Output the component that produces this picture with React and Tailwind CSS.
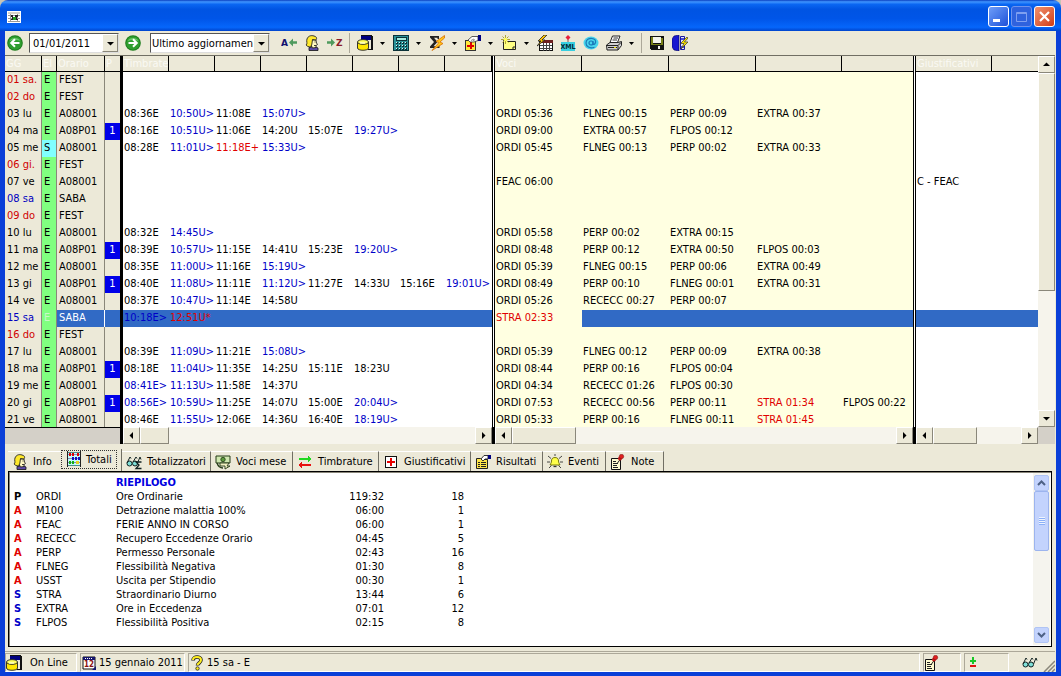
import { useState } from 'react';
import clsx from 'clsx';

// giorno, stato, orario, P, timbrate, voci, giustificativo
const days = [
  ['01 sa.', 'E', 'FEST', '', [], []],
  ['02 do', 'E', 'FEST', '', [], []],
  ['03 lu', 'E', 'A08001', '', ['08:36E', '10:50U>', '11:08E', '15:07U>'], ['ORDI 05:36', 'FLNEG 00:15', 'PERP 00:09', 'EXTRA 00:37']],
  ['04 ma', 'E', 'A08P01', '1', ['08:16E', '10:51U>', '11:06E', '14:20U', '15:07E', '19:27U>'], ['ORDI 09:00', 'EXTRA 00:57', 'FLPOS 00:12']],
  ['05 me', 'S', 'A08001', '', ['08:28E', '11:01U>', '11:18E+', '15:33U>'], ['ORDI 05:45', 'FLNEG 00:13', 'PERP 00:02', 'EXTRA 00:33']],
  ['06 gi.', 'E', 'FEST', '', [], []],
  ['07 ve', 'E', 'A08001', '', [], ['FEAC 06:00'], 'C - FEAC'],
  ['08 sa', 'E', 'SABA', '', [], []],
  ['09 do', 'E', 'FEST', '', [], []],
  ['10 lu', 'E', 'A08001', '', ['08:32E', '14:45U>'], ['ORDI 05:58', 'PERP 00:02', 'EXTRA 00:15']],
  ['11 ma', 'E', 'A08P01', '1', ['08:39E', '10:57U>', '11:15E', '14:41U', '15:23E', '19:20U>'], ['ORDI 08:48', 'PERP 00:12', 'EXTRA 00:50', 'FLPOS 00:03']],
  ['12 me', 'E', 'A08001', '', ['08:35E', '11:00U>', '11:16E', '15:19U>'], ['ORDI 05:39', 'FLNEG 00:15', 'PERP 00:06', 'EXTRA 00:49']],
  ['13 gi', 'E', 'A08P01', '1', ['08:40E', '11:08U>', '11:11E', '11:12U>', '11:27E', '14:33U', '15:16E', '19:01U>'], ['ORDI 08:49', 'PERP 00:10', 'FLNEG 00:01', 'EXTRA 00:31']],
  ['14 ve', 'E', 'A08001', '', ['08:37E', '10:47U>', '11:14E', '14:58U'], ['ORDI 05:26', 'RECECC 00:27', 'PERP 00:07']],
  ['15 sa', 'E', 'SABA', '', ['10:18E>', '12:51U*'], ['STRA 02:33']],
  ['16 do', 'E', 'FEST', '', [], []],
  ['17 lu', 'E', 'A08001', '', ['08:39E', '11:09U>', '11:21E', '15:08U>'], ['ORDI 05:39', 'FLNEG 00:12', 'PERP 00:09', 'EXTRA 00:38']],
  ['18 ma', 'E', 'A08P01', '1', ['08:18E', '11:04U>', '11:35E', '14:25U', '15:11E', '18:23U'], ['ORDI 08:44', 'PERP 00:16', 'FLPOS 00:04']],
  ['19 me', 'E', 'A08001', '', ['08:41E>', '11:13U>', '11:58E', '14:37U'], ['ORDI 04:34', 'RECECC 01:26', 'FLPOS 00:30']],
  ['20 gi', 'E', 'A08P01', '1', ['08:56E>', '10:59U>', '11:25E', '14:07U', '15:00E', '20:04U>'], ['ORDI 07:53', 'RECECC 00:56', 'PERP 00:11', 'STRA 01:34', 'FLPOS 00:22']],
  ['21 ve', 'E', 'A08001', '', ['08:46E', '11:55U>', '12:06E', '14:36U', '16:40E', '18:19U>'], ['ORDI 05:33', 'PERP 00:16', 'FLNEG 00:11', 'STRA 01:45']],
];

const totals = [
  ['P', 'ORDI', 'Ore Ordinarie', '119:32', '18'],
  ['A', 'M100', 'Detrazione malattia 100%', '06:00', '1'],
  ['A', 'FEAC', 'FERIE ANNO IN CORSO', '06:00', '1'],
  ['A', 'RECECC', 'Recupero Eccedenze Orario', '04:45', '5'],
  ['A', 'PERP', 'Permesso Personale', '02:43', '16'],
  ['A', 'FLNEG', 'Flessibilità Negativa', '01:30', '8'],
  ['A', 'USST', 'Uscita per Stipendio', '00:30', '1'],
  ['S', 'STRA', 'Straordinario Diurno', '13:44', '6'],
  ['S', 'EXTRA', 'Ore in Eccedenza', '07:01', '12'],
  ['S', 'FLPOS', 'Flessibilità Positiva', '02:15', '8'],
];

const kindColor = { P: 'text-black', A: 'text-[#e00000]', S: 'text-[#0000c8]' };

const dayColor = (day) => {
  if (['01 sa.', '02 do', '06 gi.', '09 do', '16 do'].includes(day)) return 'text-[#d00000]';
  if (day.endsWith('sa')) return 'text-[#0000c0]';
  return 'text-black';
};

const stampColor = (t) => {
  if (/[+*]$/.test(t)) return 'text-[#e00000]';
  if (t.endsWith('>')) return 'text-[#0000c8]';
  return 'text-black';
};

/* ---------- icons ---------- */

function Icon({ children, smooth }) {
  return (
    <svg viewBox="0 0 16 16" className="w-4 h-4 shrink-0" shapeRendering={smooth ? 'auto' : 'crispEdges'} aria-hidden="true">
      {children}
    </svg>
  );
}

const RoundArrow = ({ flip }) => (
  <Icon smooth>
    <circle cx="8" cy="8" r="7.8" fill="#1c7d1c" />
    <circle cx="8" cy="8" r="6.8" fill="#2f9e2f" />
    <path d="M2.500 6a6 5 0 0 1 11 0q-5-2-11 0z" fill="#6cc86c" />
    <path d={flip ? 'M3.500 8h8M8 4.200 11.800 8 8 11.800' : 'M12.500 8h-8M8 4.200 4.200 8 8 11.800'} fill="none" stroke="#fff" strokeWidth="2" />
  </Icon>
);

const SortA = () => (
  <Icon smooth>
    <text x="0" y="11" fontSize="9" fontWeight="bold" fill="#101070" fontFamily="DejaVu Sans">A</text>
    <path d="M8 7.500 12 3.500v2.800h4v2.400h-4v2.800z" fill="#4f9a5d" />
  </Icon>
);

const SortZ = () => (
  <Icon smooth>
    <path d="M8 7.500 4 3.500v2.800H0v2.400h4v2.800z" fill="#4f9a5d" />
    <text x="9" y="11" fontSize="9" fontWeight="bold" fill="#8b1a2a" fontFamily="DejaVu Sans">Z</text>
  </Icon>
);

const Person = () => (
  <Icon smooth>
    <path d="M5 15.500v-3l5-1.500 4 2v2.500z" fill="#5a4aa8" stroke="#111" strokeWidth=".8" />
    <path d="M7 5h5l.5 3 1 1.500-1.500 1v2l-3.500.5L7 10z" fill="#fff8c0" stroke="#111" strokeWidth=".8" />
    <path d="M3 4c1-3 4-4 7-3 3 1 3 2 2 4L8.500 4.500 8 8c0 2-1 2-1 4-3 0-4-1-5-2 2-1 0-4 1-6z" fill="#ffe92b" stroke="#222" strokeWidth=".9" />
    <path d="M10.500 7h1M10 10.500h2" stroke="#111" strokeWidth=".8" fill="none" />
  </Icon>
);

const Database = () => (
  <Icon>
    <path d="M4 1h11v13H4z" fill="#ece9d8" />
    <path d="M4 1h11v4H4z" fill="#000080" />
    <path d="M14 1h2v14h-5v-1h3zM4 0h11v1H4z" fill="#111" />
    <g shapeRendering="auto">
      <path d="M.5 7v6c0 3 11 3 11 0V7" fill="#ffe600" stroke="#222" strokeWidth=".9" />
      <ellipse cx="6" cy="7" rx="5.500" ry="2.400" fill="#ffff60" stroke="#222" strokeWidth=".9" />
      <path d="M3 8h5" stroke="#fff" />
    </g>
  </Icon>
);

const Calculator = () => (
  <Icon>
    <rect x="0" y="0" width="16" height="16" fill="#0b3238" />
    <rect x="1" y="1" width="14" height="14" fill="#2a9298" />
    <rect x="3" y="2" width="10" height="3" fill="#a4ecdf" stroke="#0b3238" />
    <path d="M3 7.500h11M3 10.500h11M3 13.500h11" stroke="#0b3238" strokeWidth="2" strokeDasharray="2 1" />
    <path d="M3 7h11M3 10h11M3 13h11" stroke="#d5f5f0" strokeDasharray="1 2" />
  </Icon>
);

const Sigma = () => (
  <Icon smooth>
    <path d="M1 1h9v3H8.500V2.800H5L8.500 7 4.500 11.200H9V10h1.500v3H1v-1.500L5 7 1 2.500z" fill="#222" />
    <path d="M15.500.5 7 6.500l3 1L3 15.500l11-7-3-1.500 4.500-4z" fill="#ffc818" stroke="#d96c00" strokeWidth=".8" />
  </Icon>
);

const HandCross = () => (
  <Icon>
    <rect x=".5" y="5.500" width="10" height="10" fill="#ffe93b" stroke="#333" />
    <path d="M5.500 7v7M2 10.500h7" stroke="#e00000" strokeWidth="2" />
    <path d="M3 5 7 1.500h6v4l-4 1.500H5z" fill="#fff" stroke="#333" strokeWidth=".8" shapeRendering="auto" />
    <path d="M6 5.500 9 4M8 6l2-1.500" stroke="#555" strokeWidth=".7" shapeRendering="auto" />
    <path d="M13 0h3v6h-3z" fill="#000080" />
  </Icon>
);

const NewNote = () => (
  <Icon smooth>
    <path d="M2.500 5.500h3l1 1h8v8h-12z" fill="#ffff84" stroke="#222" />
    <path d="M12 15v-3h3" stroke="#222" fill="none" />
    <path d="M4.500 0v9M0 4.500h9M1.500 1.500l6 6M7.500 1.500l-6 6" stroke="#a89d20" strokeWidth=".9" />
    <circle cx="4.500" cy="4.500" r="1.800" fill="#ffff60" />
  </Icon>
);

const FlashTable = () => (
  <Icon>
    <rect x="2.500" y="5.500" width="13" height="10" fill="#fff" stroke="#111" />
    <rect x="3" y="5" width="13" height="3" fill="#6e2020" />
    <path d="M3 10.500h12M3 13h12M6.500 8v8M9.500 8v8M12.500 8v8" stroke="#444" />
    <path d="M7 0 1 6h3L0 11l8-6H5l5-5z" fill="#ffc400" stroke="#222" strokeWidth=".8" shapeRendering="auto" />
  </Icon>
);

const Xml = () => (
  <Icon smooth>
    <path d="M8 4v3" stroke="#8a5050" />
    <path d="M8 0l2.500 2.500L8 5 5.500 2.500z" fill="#e8203c" />
    <rect x="1" y="7" width="14" height="9" fill="#38cfe0" />
    <text x="8" y="14" fontSize="7" fontWeight="bold" textAnchor="middle" fill="#052c38" fontFamily="DejaVu Sans Condensed">XML</text>
  </Icon>
);

const At = () => (
  <Icon smooth>
    <ellipse cx="8" cy="8" rx="7.500" ry="6.500" fill="#48d4ec" />
    <path d="M11.500 12.200C6.500 14 3 11.500 3 8s3-4.800 6-4.500 4 2 3.500 4-2.500 2.500-2.500 1V6" fill="none" stroke="#1a78b8" strokeWidth="1.200" />
    <circle cx="8" cy="8" r="2" fill="none" stroke="#1a78b8" strokeWidth="1.200" />
  </Icon>
);

const Printer = () => (
  <Icon smooth>
    <path d="M4 7.500 6.500 1H14l-2.500 6.500z" fill="#fff" stroke="#222" />
    <path d="M7.500 3h4.500M6.500 5h4.500" stroke="#333" />
    <path d="M.5 10 4 7.500h8l3.500-1v4L12 15H1z" fill="#d0d0d0" stroke="#222" />
    <path d="M1 10.500h11l3-3M12 10.500V15M2 12.500h9" stroke="#222" fill="none" />
    <path d="M8 12.500h2" stroke="#e8d800" />
  </Icon>
);

const Floppy = () => (
  <Icon>
    <path d="M1 1h14v14H2l-1-1z" fill="#111" />
    <path d="M2 2h2v7H2zM12 3h2v6h-2z" fill="#778018" />
    <path d="M4 2h8v6H4z" fill="#f4f4ec" />
    <path d="M2 9h12v1H2z" fill="#778018" />
    <path d="M9 11h2v3H9z" fill="#f4f4ec" />
  </Icon>
);

const Exit = () => (
  <Icon smooth>
    <path d="M0 4 2 1l5-1v16l-5-1-2-3z" fill="#1717d0" stroke="#000060" strokeWidth=".6" />
    <path d="M8.500 1.500h4v13h-4z" fill="#e8e8f4" stroke="#1717a0" />
    <path d="M9 4h3M9 12h3" stroke="#1717d0" strokeWidth="1.500" />
    <path d="M15 2 8.500 8.500H12L9 14l7-7h-3.500L16 3z" fill="#ffe500" stroke="#333" strokeWidth=".7" />
  </Icon>
);

const Abacus = () => (
  <Icon>
    <rect x="1.500" y="1.500" width="13" height="13" fill="#c4fbfb" stroke="#4b8b8b" />
    <path d="M2 3.500h12M2 7.500h12M2 11.500h12" stroke="#88b" />
    <path d="M3 2h2v3H3zM6 2h2v3H6zM11 2h2v3h-2z" fill="#e00000" />
    <path d="M6 6h2v3H6zM9 6h2v3H9zM12 6h2v3h-2z" fill="#1010c0" />
    <path d="M3 10h2v3H3zM6 10h2v3H6z" fill="#12b012" />
    <path d="M10 10h3v3h-3z" fill="#e8d020" />
    <path d="M1.500 0v16M14.500 0v16" stroke="#222" />
  </Icon>
);

const Glasses = ({ sum }) => (
  <Icon smooth>
    <circle cx="3.500" cy="9.500" r="2.500" fill="#7fe0d8" stroke="#122" />
    <circle cx="9" cy="9.500" r="2.500" fill="#7fe0d8" stroke="#122" />
    <path d="M1 9 4 3l1 1.500M7 8l3-5 1 1.500M11.500 9 14 3l1 2.500" fill="none" stroke="#122" />
    {sum && <path d="M15.500 8H10l3 3-3 3.500h5.500" fill="none" stroke="#122" strokeWidth="1.300" />}
  </Icon>
);

const Money = () => (
  <Icon smooth>
    <path d="M1 2h14v7H1z" fill="#cfe8b0" stroke="#243a16" />
    <circle cx="8" cy="5.500" r="2.200" fill="#5b9a3c" stroke="#243a16" strokeWidth=".8" />
    <path d="M5 9h9l-2 3h3l-5 3v-3H5z" fill="#f0f0c0" stroke="#243a16" strokeWidth=".9" />
    <path d="M2 9c1 3 3 5 6 5" fill="none" stroke="#243a16" strokeWidth="1.300" />
  </Icon>
);

const Swap = () => (
  <Icon>
    <path d="M2 4h9V2l4 3-4 3V6H2z" fill="#20d820" />
    <path d="M14 10H5V8l-4 3 4 3v-2h9z" fill="#e81010" />
  </Icon>
);

const Cross = () => (
  <Icon>
    <rect x="2.500" y="2.500" width="11" height="11" fill="#fff" stroke="#111" />
    <path d="M8 4v8M4 8h8" stroke="#e80000" strokeWidth="2" />
  </Icon>
);

const Results = () => (
  <Icon smooth>
    <path d="M1.500 4.500h4l1 1h6v9h-11z" fill="#ffe74a" stroke="#222" />
    <path d="M3 8.500h2M6 8.500h5M3 10.500h2M6 10.500h5M3 12.500h2M6 12.500h5" stroke="#222" />
    <path d="M6 5 9 1.500h4V5h-3l-2 2z" fill="#fff" stroke="#222" strokeWidth=".9" />
    <path d="M13 1h3v4h-3z" fill="#000080" />
  </Icon>
);

const Bulb = () => (
  <Icon smooth>
    <path d="M1 2l3 2.500M15 2l-3 2.500M0 8h3M13 8h3M2 14l2.500-2.500M14 14l-2.500-2.500M8 0v2" stroke="#333" strokeWidth=".9" />
    <path d="M8 3.500c3 0 3.500 2 3.500 3.500s.5 2 1.500 4H3c1-2 1.500-2.500 1.500-4S5 3.500 8 3.500z" fill="#ffff48" stroke="#6a6a00" strokeWidth=".9" />
    <path d="M6.500 12.500h3" stroke="#333" strokeWidth="1.300" />
  </Icon>
);

const PinNote = () => (
  <Icon smooth>
    <path d="M1.500 4.500h9v11h-9z" fill="#fffbd0" stroke="#111" />
    <path d="M3 7.500h3M3 9.500h5M3 11.500h4M3 13.500h5" stroke="#222" />
    <path d="M7.500 9l3-4" stroke="#222" />
    <circle cx="10" cy="4.500" r="2" fill="#c81818" />
    <circle cx="11.500" cy="2.500" r="2.200" fill="#e02020" stroke="#701010" strokeWidth=".5" />
  </Icon>
);

const Calendar = () => (
  <Icon smooth>
    <path d="M2 2h12v11l-1 1H2z" fill="#fff" stroke="#111" />
    <path d="M2 2h12v3H2z" fill="#16166e" />
    <path d="M4 3.500h8" stroke="#fff" strokeDasharray="1 1" />
    <text x="3" y="12" fontSize="8" fontWeight="bold" fill="#8a1010" fontFamily="DejaVu Sans Condensed">12</text>
    <path d="M11 15h4v-4z" fill="#16166e" />
  </Icon>
);

const Question = () => (
  <Icon smooth>
    <path d="M4 5.500C4 1 12 1 12 5c0 3-3.500 3-3.500 5.500" fill="none" stroke="#222" strokeWidth="3.600" />
    <circle cx="8.500" cy="13.500" r="1.700" fill="#ffee20" stroke="#222" strokeWidth=".8" />
    <path d="M4 5C4 1 12 1 12 5c0 3-3.500 3-3.500 5" fill="none" stroke="#ffee20" strokeWidth="2" />
  </Icon>
);

const PlusMinus = () => (
  <Icon>
    <path d="M8 2v7M5 5.500h6" stroke="#18c828" strokeWidth="2" />
    <path d="M5 11h6" stroke="#e01010" strokeWidth="2" />
  </Icon>
);

const arrows = {
  up: 'M0 5h7L3.500 1.500z',
  down: 'M0 2h7L3.500 5.500z',
  left: 'M5 0v7L1.500 3.500z',
  right: 'M2 0v7l3.500-3.500z',
};

const Arrow = ({ dir }) => (
  <svg viewBox="0 0 7 7" className="w-[7px] h-[7px]" aria-hidden="true">
    <path d={arrows[dir]} fill="#000" />
  </svg>
);

/* ---------- controls ---------- */

const raised = 'bg-[#ece9d8] border border-t-white border-l-white border-r-[#8a877a] border-b-[#8a877a]';
const track = 'bg-[#f6f4ec]';

function ScrollButton({ dir, label }) {
  return (
    <button type="button" aria-label={label} className={clsx(raised, 'w-[17px] h-[17px] shrink-0 flex items-center justify-center')}>
      <Arrow dir={dir} />
    </button>
  );
}

function HScroll({ thumb }) {
  return (
    <div className={clsx(track, 'h-[17px] flex')}>
      <ScrollButton dir="left" label="Scorri a sinistra" />
      <div className={clsx(raised, thumb)} />
      <div className="flex-1" />
      <ScrollButton dir="right" label="Scorri a destra" />
    </div>
  );
}

function Divider() {
  return (
    <div className="w-[3px] shrink-0 flex flex-col bg-black">
      <div className="flex-1 mx-px bg-white" />
      <div className="h-[17px]" />
    </div>
  );
}

function Tool({ icon, label, menu }) {
  return (
    <div className="flex items-center shrink-0">
      <button type="button" aria-label={label} className="w-[23px] h-[22px] flex items-center justify-center">{icon}</button>
      {menu && (
        <button type="button" aria-label={`${label}, opzioni`} className="w-[13px] h-[22px] flex items-center justify-center">
          <svg viewBox="0 0 5 3" className="w-[5px] h-[3px]" aria-hidden="true"><path d="M0 0h5L2.500 3z" /></svg>
        </button>
      )}
    </div>
  );
}

const Head = ({ children, last }) => (
  <th
    scope="col"
    className={clsx(
      'h-4 p-0 pl-px text-left font-normal text-[#faf9f4] bg-[#ece9d8] border-b border-b-black overflow-hidden',
      !last && 'border-r border-r-black'
    )}
  >
    {children}
  </th>
);

function Toolbar() {
  const [date, setDate] = useState('01/01/2011');

  return (
    <div className="h-6 flex items-center bg-[#ece9d8] overflow-hidden">
      <button type="button" aria-label="Indietro" className="w-6 flex justify-center pr-1"><RoundArrow /></button>
      <div className="w-[90px] h-5 flex bg-white border border-[#555] border-b-[#ddd] border-r-[#ddd]">
        <input
          aria-label="Data"
          value={date}
          onChange={(e) => setDate(e.target.value)}
          className="min-w-0 flex-1 pl-[3px] bg-white outline-none"
        />
        <button type="button" aria-label="Apri calendario" className={clsx(raised, 'w-4 flex items-center justify-center')}>
          <Arrow dir="down" />
        </button>
      </div>
      <button type="button" aria-label="Avanti" className="w-7 flex justify-center"><RoundArrow flip /></button>
      <div className="relative ml-[3px] w-[120px] h-5 bg-white border border-[#555] border-b-[#ddd] border-r-[#ddd]">
        <select aria-label="Vista" className="w-full h-full pl-px appearance-none bg-white outline-none overflow-hidden text-clip">
          <option>Ultimo aggiornamento</option>
        </select>
        <div className={clsx(raised, 'absolute top-0 right-0 w-4 h-[18px] flex items-center justify-center pointer-events-none')}>
          <Arrow dir="down" />
        </div>
      </div>
      <div className="flex ml-[7px]">
        <Tool icon={<SortA />} label="Precedente" />
        <Tool icon={<Person />} label="Dipendente" />
        <Tool icon={<SortZ />} label="Successivo" />
      </div>
      <div className="w-px h-5 mx-[3px] bg-[#aca899]" />
      <Tool icon={<Database />} label="Archivio" menu />
      <Tool icon={<Calculator />} label="Calcolo" menu />
      <Tool icon={<Sigma />} label="Totali" menu />
      <Tool icon={<HandCross />} label="Giustificativo" menu />
      <Tool icon={<NewNote />} label="Nuova nota" menu />
      <Tool icon={<FlashTable />} label="Elabora" />
      <Tool icon={<Xml />} label="Esporta" />
      <Tool icon={<At />} label="Posta" />
      <Tool icon={<Printer />} label="Stampa" menu />
      <div className="w-px h-5 mx-[3px] bg-[#aca899]" />
      <Tool icon={<Floppy />} label="Salva" />
      <Tool icon={<Exit />} label="Esci" />
    </div>
  );
}

function DaysTable() {
  return (
    <table className="w-[115px] table-fixed border-separate border-spacing-0">
      <colgroup>
        <col className="w-[37px]" /><col className="w-[15px]" /><col className="w-12" /><col className="w-[15px]" />
      </colgroup>
      <thead><tr><Head>GG</Head><Head>EI</Head><Head>Orario</Head><Head last>P</Head></tr></thead>
      <tbody className="align-top">
        {days.map(([day, state, shift, p]) => {
          const sel = day === '15 sa';
          return (
            <tr key={day}>
              <td className={clsx('h-[17px] p-0 pl-0.5 border-r border-[#8a877a]', dayColor(day))}>{day}</td>
              <td
                className={clsx(
                  'p-0 pl-0.5 border-r border-[#8a877a]',
                  state === 'S' ? 'bg-[#80ffff]' : 'bg-[#80ff80]',
                  sel && 'text-[#c8f8c8]'
                )}
              >
                {state}
              </td>
              <td className={clsx('p-0 pl-0.5 border-r', sel ? 'bg-[#316ac5] text-white border-white' : 'border-[#8a877a]')}>{shift}</td>
              <td className={clsx('p-0 text-center', p && 'bg-[#0000e8] text-white', sel && 'bg-[#316ac5]')}>{p}</td>
            </tr>
          );
        })}
      </tbody>
    </table>
  );
}

function StampsTable() {
  return (
    <table className="w-full table-fixed border-separate border-spacing-0">
      <colgroup>
        {[0, 1, 2, 3, 4, 5, 6].map((n) => <col key={n} className="w-[46px]" />)}
        <col />
      </colgroup>
      <thead>
        <tr>
          <Head>Timbrate</Head>
          {[1, 2, 3, 4, 5, 6, 7].map((n) => <Head key={n} />)}
        </tr>
      </thead>
      <tbody className="align-top">
        {days.map(([day, , , , stamps]) => (
          <tr key={day} className={day === '15 sa' ? 'bg-[#316ac5]' : 'bg-white'}>
            {[0, 1, 2, 3, 4, 5, 6, 7].map((n) => (
              <td key={n} className={clsx('h-[17px] p-0 pl-px', stampColor(stamps[n] || ''))}>{stamps[n]}</td>
            ))}
          </tr>
        ))}
      </tbody>
    </table>
  );
}

function EntriesTable() {
  return (
    <table className="w-full table-fixed border-separate border-spacing-0">
      <colgroup>
        <col className="w-[87px]" /><col className="w-[87px]" /><col className="w-[87px]" /><col className="w-[86px]" /><col />
      </colgroup>
      <thead><tr><Head>Voci</Head><Head /><Head /><Head /><Head last /></tr></thead>
      <tbody className="align-top">
        {days.map(([day, , , , , entries]) => (
          <tr key={day}>
            {[0, 1, 2, 3, 4].map((n) => (
              <td
                key={n}
                className={clsx(
                  'h-[17px] p-0 pl-px',
                  day === '15 sa' && n > 0 ? 'bg-[#316ac5]' : 'bg-[#ffffe1]',
                  (entries[n] || '').startsWith('STRA') && 'text-[#e00000]'
                )}
              >
                {entries[n]}
              </td>
            ))}
          </tr>
        ))}
      </tbody>
    </table>
  );
}

function ReasonsTable() {
  return (
    <table className="w-full table-fixed border-separate border-spacing-0">
      <colgroup><col className="w-[76px]" /><col /></colgroup>
      <thead><tr><Head>Giustificativi</Head><Head last /></tr></thead>
      <tbody className="align-top">
        {days.map(([day, , , , , , reason]) => (
          <tr key={day} className={day === '15 sa' ? 'bg-[#316ac5]' : 'bg-white'}>
            <td className="h-[17px] p-0 pl-px">{reason}</td>
            <td className="p-0" />
          </tr>
        ))}
      </tbody>
    </table>
  );
}

function Grid() {
  const pane = 'h-[371px] overflow-hidden';

  return (
    <div className="flex border-t border-[#716f64]">
      <div className="shrink-0">
        <div className={pane}><DaysTable /></div>
        <div className="h-[17px] bg-[#d4d0c8] border-t border-black" />
      </div>
      <div className="w-[3px] shrink-0 bg-black" />
      <div className="w-[369px] shrink-0">
        <div className={pane}><StampsTable /></div>
        <HScroll thumb="w-[29px]" />
      </div>
      <Divider />
      <div className="w-[418px] shrink-0">
        <div className={pane}><EntriesTable /></div>
        <HScroll thumb="w-16" />
      </div>
      <Divider />
      <div className="min-w-0 flex-1">
        <div className={pane}><ReasonsTable /></div>
        <HScroll thumb="w-11" />
      </div>
      <div className="shrink-0 flex flex-col">
        <ScrollButton dir="up" label="Scorri in alto" />
        <div className={clsx(raised, 'h-[218px]')} />
        <div className={clsx(track, 'flex-1')} />
        <ScrollButton dir="down" label="Scorri in basso" />
        <div className="h-[17px] bg-[#d4d0c8]" />
      </div>
    </div>
  );
}

const tabs = [
  { name: 'Info', icon: <Person />, width: 'w-[53px]' },
  { name: 'Totali', icon: <Abacus />, width: 'w-[61px]' },
  { name: 'Totalizzatori', icon: <Glasses sum />, width: 'w-[89px]' },
  { name: 'Voci mese', icon: <Money />, width: 'w-[82px]' },
  { name: 'Timbrature', icon: <Swap />, width: 'w-[86px]' },
  { name: 'Giustificativi', icon: <Cross />, width: 'w-[92px]' },
  { name: 'Risultati', icon: <Results />, width: 'w-[72px]' },
  { name: 'Eventi', icon: <Bulb />, width: 'w-[63px]' },
  { name: 'Note', icon: <PinNote />, width: 'w-[58px]' },
];

function Tabs({ active, onChange }) {
  return (
    <div role="tablist" className="flex items-end h-[27px] pl-[3px]">
      {tabs.map(({ name, icon, width }) => {
        const on = name === active;
        return (
          <button
            key={name}
            type="button"
            role="tab"
            aria-selected={on}
            onClick={() => onChange(name)}
            className={clsx(
              width,
              'shrink-0 flex items-center whitespace-nowrap',
              on
                ? 'h-[22px] pb-0.5 border-r border-[#716f64]'
                : 'h-5 pl-1 gap-[5px] border-r border-t border-t-white',
              !on && (name === 'Info' ? 'border-r-transparent' : 'border-r-[#716f64]')
            )}
          >
            {on ? (
              <span className="flex items-center gap-1 pl-1 pr-1 h-[19px] border border-dotted border-[#333]">
                {icon}{name}
              </span>
            ) : (
              <>{icon}{name}</>
            )}
          </button>
        );
      })}
    </div>
  );
}

function XpButton({ up }) {
  return (
    <button
      type="button"
      aria-label={up ? 'Scorri in alto' : 'Scorri in basso'}
      className="h-4 w-[15px] rounded-xs bg-[#c3d3fd] border border-[#b0c4f4] flex items-center justify-center"
    >
      <svg viewBox="0 0 9 6" className="w-[9px] h-1.5" aria-hidden="true">
        <path d={up ? 'M1 5l3.500-3.500L8 5' : 'M1 1l3.500 3.500L8 1'} fill="none" stroke="#4d6185" strokeWidth="2" />
      </svg>
    </button>
  );
}

function Summary() {
  return (
    <div className="flex-1 flex mx-[3px] p-px bg-white border border-black shadow-[inset_1px_1px_0_#8a877a]">
      <div className="flex-1 pt-[3px]">
        <table className="w-[454px] table-fixed leading-[14px]">
          <colgroup>
            <col className="w-[26px]" /><col className="w-20" /><col className="w-[200px]" /><col className="w-[68px]" /><col className="w-20" />
          </colgroup>
          <thead>
            <tr>
              <td /><td />
              <th scope="col" className="p-0 text-left font-bold text-[#0000e0]">RIEPILOGO</th>
              <td /><td />
            </tr>
          </thead>
          <tbody>
            {totals.map(([kind, code, desc, hours, count]) => (
              <tr key={code}>
                <td className={clsx('p-0 pl-1 font-bold', kindColor[kind])}>{kind}</td>
                <td className="p-0">{code}</td>
                <td className="p-0">{desc}</td>
                <td className="p-0 text-right">{hours}</td>
                <td className="p-0 text-right">{count}</td>
              </tr>
            ))}
          </tbody>
        </table>
      </div>
      <div className="w-[17px] py-0.5 flex flex-col items-center bg-[#f5f4ee]">
        <XpButton up />
        <div className="w-[15px] h-[60px] flex items-center justify-center rounded-xs bg-[#c3d3fd] border border-[#9cb4ee]">
          <div className="w-1.5 h-2 bg-[repeating-linear-gradient(#eef4fe_0_1px,#8cb0f8_1px_2px)]" />
        </div>
        <div className="flex-1" />
        <XpButton />
      </div>
    </div>
  );
}

const sunken = 'h-[19px] flex items-center border border-t-[#aca899] border-l-[#aca899] border-r-white border-b-white whitespace-nowrap';

function StatusBar() {
  return (
    <div className="h-[21px] mt-1 flex items-end gap-[3px] border-t border-[#aca899]">
      <div className={clsx(sunken, 'w-[72px] gap-2')}><Database />On Line</div>
      <div className={clsx(sunken, 'w-[105px] gap-0.5')}><Calendar />15 gennaio 2011</div>
      <div className={clsx(sunken, 'flex-1 gap-0.5')}><Question />15 sa - E</div>
      <div className={clsx(sunken, 'w-[38px]')}><PinNote /></div>
      <div className={clsx(sunken, 'w-[45px]')}><PlusMinus /></div>
      <div className="w-[43px] h-[19px] flex items-center justify-between pl-2.5">
        <Glasses />
        <svg viewBox="0 0 12 12" className="w-3 h-3 self-end" aria-hidden="true">
          <path d="M1 12 12 1M5 12l7-7M9 12l3-3" stroke="#8a877a" strokeWidth="1.500" />
        </svg>
      </div>
    </div>
  );
}

function TitleBar() {
  const box = 'w-[21px] h-[21px] rounded-[3px] border flex items-center justify-center';

  return (
    <div className="h-[31px] shrink-0 flex items-center px-[7px] pt-0.5 rounded-t-lg bg-[linear-gradient(#0a3fc0_0,#3f95ff_6%,#0a66f2_14%,#0054e3_30%,#0055e8_60%,#0566fb_88%,#0044cc_100%)]">
      <svg viewBox="0 0 14 12" className="w-3.5 h-3" shapeRendering="crispEdges" aria-hidden="true">
        <rect width="14" height="12" fill="#fff" />
        <path d="M1 1h12v2H1z" fill="#d8d4c8" />
        <path d="M1 4.500h12M1 7.500h12M1 10.500h12M3.500 3v8M10.500 3v8" stroke="#999" />
        <path d="M4 4h2v2H4zM8 4h3v2H8zM5 6h5v2H5zM4 8h2v1H4zM9 8h2v1H9z" fill="#222" />
        <path d="M6 6h3v3H6z" fill="#20a020" />
      </svg>
      <div className="flex-1" />
      <div className="flex gap-0.5 -mr-px">
        <button type="button" aria-label="Riduci a icona" className={clsx(box, 'border-white bg-linear-to-br from-[#6f9df8] to-[#1e4fd8]')}>
          <svg viewBox="0 0 13 13" className="w-[13px] h-[13px]" aria-hidden="true"><path d="M1 9h7v3H1z" fill="#fff" /></svg>
        </button>
        <button type="button" aria-label="Ingrandisci" disabled className={clsx(box, 'border-[#6f93ec] bg-[#2f62de]')}>
          <svg viewBox="0 0 13 13" className="w-[13px] h-[13px]" aria-hidden="true">
            <path d="M1.500 2.500h10v9h-10zM1 3.500h11" fill="none" stroke="#7f9ff0" />
          </svg>
        </button>
        <button type="button" aria-label="Chiudi" className={clsx(box, 'border-white bg-linear-to-br from-[#f0906c] to-[#d03a10]')}>
          <svg viewBox="0 0 13 13" className="w-[13px] h-[13px]" aria-hidden="true">
            <path d="M2 2l9 9M11 2l-9 9" stroke="#fff" strokeWidth="2.200" />
          </svg>
        </button>
      </div>
    </div>
  );
}

export default function App() {
  const [tab, setTab] = useState('Totali');

  return (
    <div className="min-h-screen flex flex-col bg-[#c8c4b4] font-['DejaVu_Sans_Condensed','DejaVu_Sans',sans-serif] text-[11px] leading-[15px] text-black">
      <TitleBar />
      <div className="flex-1 flex flex-col px-[5px] pb-1 bg-[#0a3fd8]">
        <main className="flex-1 flex flex-col bg-[#ece9d8] pr-px">
          <Toolbar />
          <Grid />
          <Tabs active={tab} onChange={setTab} />
          <Summary />
          <StatusBar />
        </main>
      </div>
    </div>
  );
}
